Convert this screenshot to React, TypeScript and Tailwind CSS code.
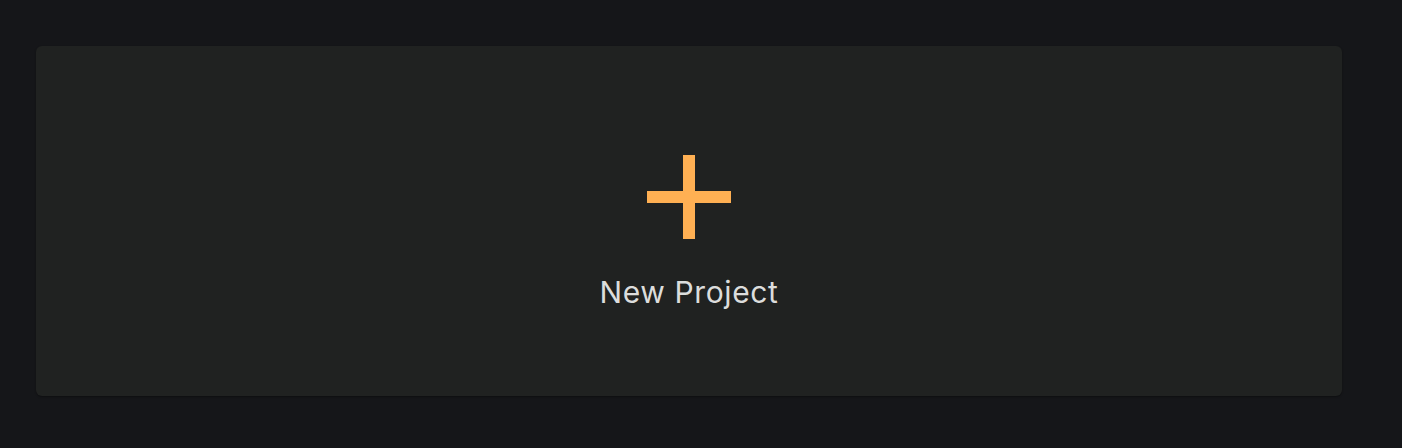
import React from "react";

export default function App() {
  return (
    <div className="min-h-[448px] w-full bg-[#151619] pl-[36px] pr-[60px] pt-[46px] pb-[52px]">
      <button
        type="button"
        className="flex h-[350px] w-full flex-col items-center rounded-[6px] bg-[#202221] pt-[109px] shadow-[0_1px_2px_rgba(0,0,0,0.35)]"
      >
        <svg width="84" height="84" viewBox="0 0 84 84" aria-hidden="true">
          <rect x="36" y="0" width="12" height="84" fill="#ffb053" />
          <rect x="0" y="36" width="84" height="12" fill="#ffb053" />
        </svg>
        <span
          className="mt-[38px] text-[30px] leading-[30px] text-[#dcdddc] tracking-[0.6px]"
          style={{ fontFamily: "Inter, 'Open Sans', sans-serif" }}
        >
          New Project
        </span>
      </button>
    </div>
  );
}
